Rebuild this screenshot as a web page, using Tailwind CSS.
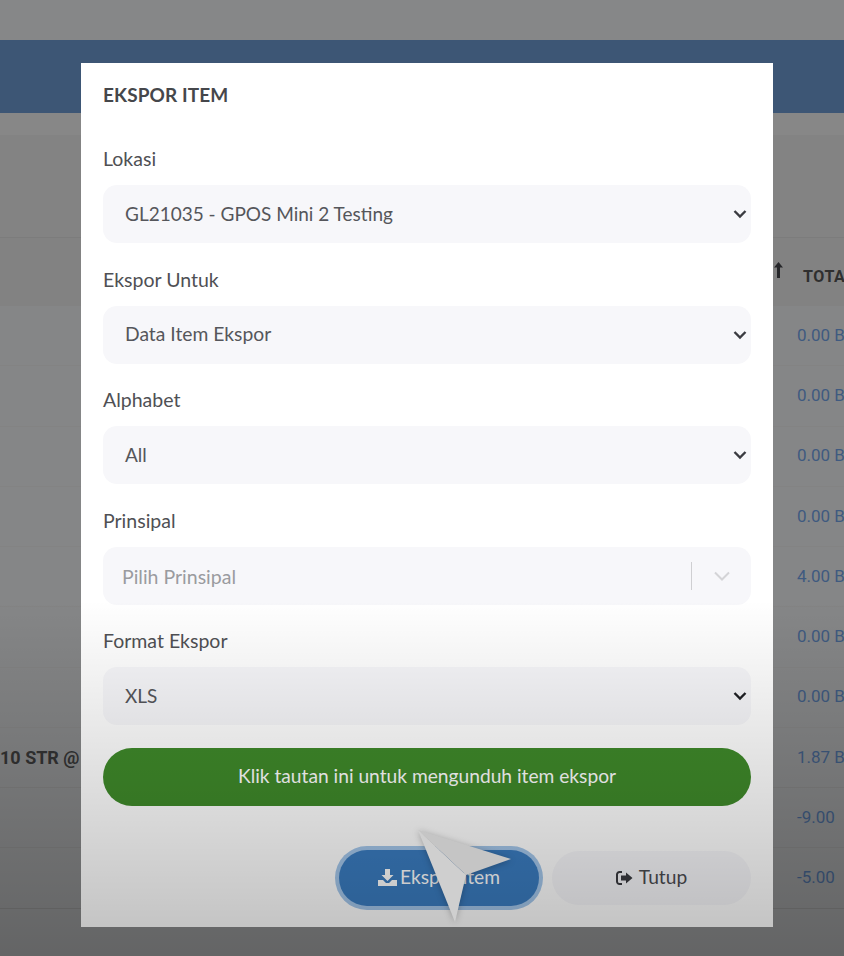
<!DOCTYPE html>
<html lang="en">
<head>
    <meta charset="UTF-8">
    <meta name="viewport" content="width=device-width, initial-scale=1.0">
    <title>Ekspor Item</title>
    <script src="https://cdn.jsdelivr.net/npm/@tailwindcss/browser@4"></script>
</head>
<body class="relative h-[956px] w-[844px] overflow-hidden bg-[#858687] font-['Lato',sans-serif]">
    <!-- page behind the modal -->
    <div class="flex h-full flex-col font-['Roboto',sans-serif]">
        <div class="h-[40px] bg-[#868788]"></div>
        <div class="h-[73px] bg-[#3d5675]"></div>
        <div class="h-[22px] bg-[#878787]"></div>
        <div class="h-[103px] border-b border-[#7c7c7c] bg-[#838383]"></div>
        <div class="grid h-[68px] grid-cols-[797px_1fr] items-center bg-[#828282] text-[16px] font-bold tracking-[0.6px] text-[#2f2f2f]">
            <div class="flex justify-end pr-[14px]">
                <svg width="9" height="16" viewBox="0 0 9 16" class="mb-[4px]"><path d="M4.500 0 9 5.500H6V16H3V5.500H0z" fill="#26272a"/></svg>
            </div>
            <div class="mt-[10px] whitespace-nowrap pl-[6px]">TOTA</div>
        </div>
        <div class="text-[17px] text-[#3f5a80]">
            <div class="grid h-[60.25px] grid-cols-[797px_1fr] items-center border-b border-[#838383]"><div></div><div class="whitespace-nowrap">0.00 B</div></div>
            <div class="grid h-[60.25px] grid-cols-[797px_1fr] items-center border-b border-[#838383]"><div></div><div class="whitespace-nowrap">0.00 B</div></div>
            <div class="grid h-[60.25px] grid-cols-[797px_1fr] items-center border-b border-[#838383]"><div></div><div class="whitespace-nowrap">0.00 B</div></div>
            <div class="grid h-[60.25px] grid-cols-[797px_1fr] items-center border-b border-[#838383]"><div></div><div class="whitespace-nowrap">0.00 B</div></div>
            <div class="grid h-[60.25px] grid-cols-[797px_1fr] items-center border-b border-[#838383]"><div></div><div class="whitespace-nowrap">4.00 B</div></div>
            <div class="grid h-[60.25px] grid-cols-[797px_1fr] items-center border-b border-[#838383]"><div></div><div class="whitespace-nowrap">0.00 B</div></div>
            <div class="grid h-[60.25px] grid-cols-[797px_1fr] items-center border-b border-[#838383]"><div></div><div class="whitespace-nowrap">0.00 B</div></div>
            <div class="grid h-[60.25px] grid-cols-[797px_1fr] items-center border-b border-[#808080]"><div class="whitespace-nowrap text-[18px] font-bold text-[#333]">10 STR @</div><div class="whitespace-nowrap">1.87 B</div></div>
            <div class="grid h-[60.25px] grid-cols-[797px_1fr] items-center border-b border-[#808080]"><div></div><div class="whitespace-nowrap">-9.00</div></div>
            <div class="grid h-[60.25px] grid-cols-[797px_1fr] items-center border-b border-[#7a7a7a]"><div></div><div class="whitespace-nowrap">-5.00</div></div>
        </div>
    </div>

    <!-- modal -->
    <div class="absolute left-[81px] top-[63px] h-[864px] w-[692px] bg-white px-[22px] pt-[21px]">
        <h2 class="h-[22px] text-[19px] font-bold leading-[22px] tracking-[0.1px] text-[#45474b]">EKSPOR ITEM</h2>

        <div class="mt-[41px] h-[120.5px]">
            <label class="block h-[24px] text-[19.500px] leading-[24px] text-[#4f5054]">Lokasi</label>
            <div class="mt-[14px] flex h-[58px] items-center justify-between rounded-[14px] bg-[#f7f7fa] pl-[22px] pr-[5px] text-[19px] text-[#55565b]">
                <span>GL21035 - GPOS Mini 2 Testing</span>
                <svg width="14" height="10" viewBox="0 0 14 10" class="mr-[-1px]"><path d="M1.500 2 7 7.500 12.500 2" fill="none" stroke="#3a3b40" stroke-width="2.400"/></svg>
            </div>
        </div>
        <div class="h-[120.5px]">
            <label class="block h-[24px] text-[19.500px] leading-[24px] text-[#4f5054]">Ekspor Untuk</label>
            <div class="mt-[14px] flex h-[58px] items-center justify-between rounded-[14px] bg-[#f7f7fa] pl-[22px] pr-[5px] text-[19.300px] text-[#55565b]">
                <span>Data Item Ekspor</span>
                <svg width="14" height="10" viewBox="0 0 14 10" class="mr-[-1px]"><path d="M1.500 2 7 7.500 12.500 2" fill="none" stroke="#3a3b40" stroke-width="2.400"/></svg>
            </div>
        </div>
        <div class="h-[120.5px]">
            <label class="block h-[24px] text-[19.500px] leading-[24px] text-[#4f5054]">Alphabet</label>
            <div class="mt-[14px] flex h-[58px] items-center justify-between rounded-[14px] bg-[#f7f7fa] pl-[22px] pr-[5px] text-[19px] text-[#55565b]">
                <span>All</span>
                <svg width="14" height="10" viewBox="0 0 14 10" class="mr-[-1px]"><path d="M1.500 2 7 7.500 12.500 2" fill="none" stroke="#3a3b40" stroke-width="2.400"/></svg>
            </div>
        </div>
        <div class="h-[120.5px]">
            <label class="block h-[24px] text-[19.500px] leading-[24px] text-[#4f5054]">Prinsipal</label>
            <div class="mt-[14px] flex h-[58px] items-center justify-between rounded-[14px] bg-[#f7f7fa] pl-[19px] pr-[20px] text-[19.500px] text-[#9a9b9f]">
                <span class="mt-[2px]">Pilih Prinsipal</span>
                <div class="flex items-center gap-[21px]">
                    <div class="h-[28px] w-px bg-[#cfcfd2]"></div>
                    <svg width="18" height="12" viewBox="0 0 18 12"><path d="M2 2.500 9 9.500 16 2.500" fill="none" stroke="#d4d4d7" stroke-width="2"/></svg>
                </div>
            </div>
        </div>
        <div class="h-[118.5px]">
            <label class="block h-[24px] text-[19.500px] leading-[24px] text-[#4f5054]">Format Ekspor</label>
            <div class="mt-[14px] flex h-[58px] items-center justify-between rounded-[14px] bg-[#f7f7fa] pl-[22px] pr-[5px] text-[19px] text-[#55565b]">
                <span>XLS</span>
                <svg width="14" height="10" viewBox="0 0 14 10" class="mr-[-1px]"><path d="M1.500 2 7 7.500 12.500 2" fill="none" stroke="#1f2024" stroke-width="2.400"/></svg>
            </div>
        </div>

        <a class="flex h-[58px] items-center justify-center rounded-full bg-[#3f8a2a] text-[19.200px] text-white">Klik tautan ini untuk mengunduh item ekspor</a>

        <div class="mt-[44px] flex items-center justify-end gap-[13px] text-[19.200px]">
            <button class="flex h-[56px] w-[200px] items-center justify-center gap-[3px] rounded-full bg-[#3a7cc0] text-white ring-4 ring-[#a3c6ea]">
                <svg width="19" height="17" viewBox="0 0 19 17"><path d="M7 0h5v6h3.500L9.500 12 3.500 6H7zM0 11h5l3 3h3l3-3h5v6H0z" fill="#fff"/></svg>
                <span>Ekspor Item</span>
            </button>
            <button class="flex h-[54px] w-[199px] items-center justify-center gap-[6px] rounded-full bg-[#f7f7fa] text-[#4a4b50]">
                <svg width="17" height="14" viewBox="0 0 17 14"><path d="M6 1H3.500A2.500 2.500 0 0 0 1 3.500v7A2.500 2.500 0 0 0 3.500 13H6" fill="none" stroke="#3a3b40" stroke-width="2"/><path d="M10 1.500 16.500 7 10 12.500V9.500H5v-5h5z" fill="#3a3b40"/></svg>
                <span>Tutup</span>
            </button>
        </div>
    </div>

    <!-- video fade at the bottom, lies over everything but the pointer -->
    <div class="absolute inset-x-0 bottom-0 top-[600px] bg-linear-to-b from-black/0 to-black/25"></div>

    <!-- pointer -->
    <svg class="absolute left-0 top-0 drop-shadow-[0_1px_3px_rgba(0,0,0,0.25)]" width="844" height="956" viewBox="0 0 844 956">
        <path d="M418 830 511 859 466 875z" fill="#c5c5c5"/>
        <path d="M418 830 466 875 455 922z" fill="#cfcfcf"/>
    </svg>
</body>
</html>
